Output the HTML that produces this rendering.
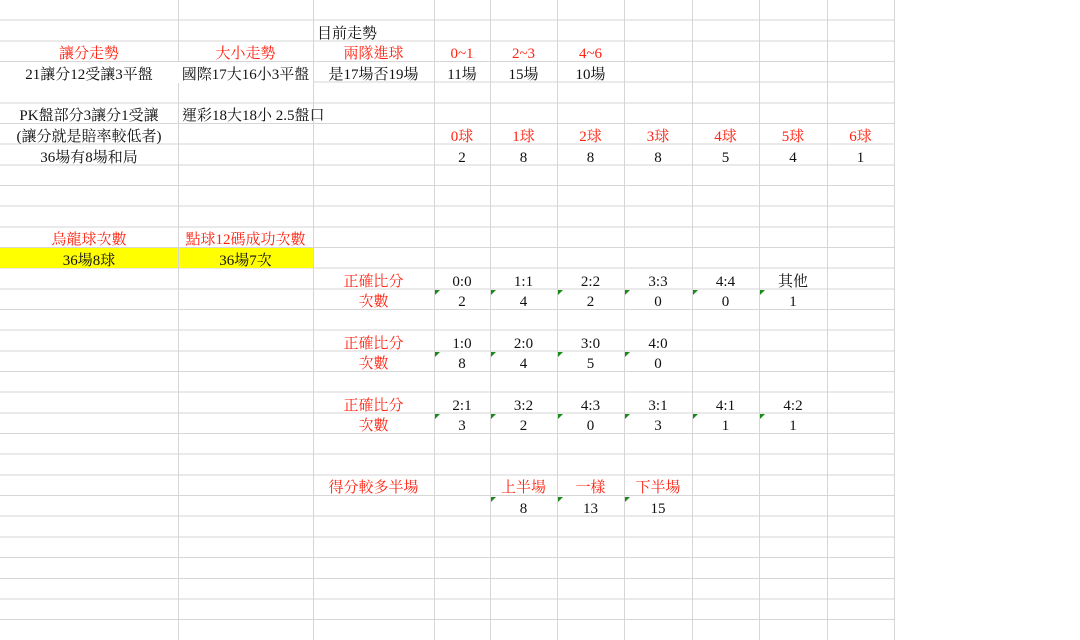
<!DOCTYPE html>
<html><head><meta charset="utf-8"><style>
body{margin:0;width:1080px;height:640px;background:#fff;overflow:hidden;position:relative;font-family:"Liberation Serif","Noto Serif CJK TC",serif;font-size:15px;color:#111}
.g{position:absolute;left:0;top:0;width:894px;height:640px;background:repeating-linear-gradient(to bottom,transparent 0,transparent 19.67px,#d6d6d6 19.67px,#d6d6d6 20.67px)}
.v{position:absolute;top:0;width:1px;height:640px;background:#d6d6d6}
.c{position:absolute;height:21px;line-height:26px;text-align:center;white-space:nowrap}
.r{color:#f21}
.l{text-align:left}
.t{position:absolute;width:0;height:0;border-top:5px solid #1a8a1a;border-right:5px solid transparent}
.y{position:absolute;left:0;top:248px;width:313px;height:20px;background:#ffff00}
</style></head><body>
<div class="g"></div>
<div class="y"></div>
<div class="v" style="left:178px"></div><div class="v" style="left:313px"></div><div class="v" style="left:434px"></div><div class="v" style="left:490px"></div><div class="v" style="left:557px"></div><div class="v" style="left:624px"></div><div class="v" style="left:692px"></div><div class="v" style="left:759px"></div><div class="v" style="left:827px"></div><div class="v" style="left:894px"></div>

<div class="c l" style="left:317px;top:21px">目前走勢</div>

<div class="c r" style="left:0;width:178px;top:41px">讓分走勢</div>
<div class="c r" style="left:178px;width:135px;top:41px">大小走勢</div>
<div class="c r" style="left:313px;width:121px;top:41px">兩隊進球</div>
<div class="c r" style="left:434px;width:56px;top:41px">0~1</div>
<div class="c r" style="left:490px;width:67px;top:41px">2~3</div>
<div class="c r" style="left:557px;width:67px;top:41px">4~6</div>

<div class="c" style="left:0;width:178px;top:62px;background:#fff">21讓分12受讓3平盤</div>
<div class="c" style="left:178px;width:135px;top:62px;background:#fff">國際17大16小3平盤</div>
<div class="c" style="left:313px;width:121px;top:62px">是17場否19場</div>
<div class="c" style="left:434px;width:56px;top:62px">11場</div>
<div class="c" style="left:490px;width:67px;top:62px">15場</div>
<div class="c" style="left:557px;width:67px;top:62px">10場</div>

<div class="c" style="left:0;width:178px;top:103px">PK盤部分3讓分1受讓</div>
<div class="c l" style="left:182px;top:103px">運彩18大18小 2.5盤口</div>

<div class="c" style="left:0;width:178px;top:124px">(讓分就是賠率較低者)</div>
<div class="c r" style="left:434px;width:56px;top:124px">0球</div>
<div class="c r" style="left:490px;width:67px;top:124px">1球</div>
<div class="c r" style="left:557px;width:67px;top:124px">2球</div>
<div class="c r" style="left:624px;width:68px;top:124px">3球</div>
<div class="c r" style="left:692px;width:67px;top:124px">4球</div>
<div class="c r" style="left:759px;width:68px;top:124px">5球</div>
<div class="c r" style="left:827px;width:67px;top:124px">6球</div>

<div class="c" style="left:0;width:178px;top:145px">36場有8場和局</div>
<div class="c" style="left:434px;width:56px;top:145px">2</div>
<div class="c" style="left:490px;width:67px;top:145px">8</div>
<div class="c" style="left:557px;width:67px;top:145px">8</div>
<div class="c" style="left:624px;width:68px;top:145px">8</div>
<div class="c" style="left:692px;width:67px;top:145px">5</div>
<div class="c" style="left:759px;width:68px;top:145px">4</div>
<div class="c" style="left:827px;width:67px;top:145px">1</div>

<div class="c r" style="left:0;width:178px;top:227px">烏龍球次數</div>
<div class="c r" style="left:178px;width:135px;top:227px">點球12碼成功次數</div>
<div class="c" style="left:0;width:178px;top:248px">36場8球</div>
<div class="c" style="left:178px;width:135px;top:248px">36場7次</div>

<div class="c r" style="left:313px;width:121px;top:269px">正確比分</div>
<div class="c" style="left:434px;width:56px;top:269px">0:0</div>
<div class="c" style="left:490px;width:67px;top:269px">1:1</div>
<div class="c" style="left:557px;width:67px;top:269px">2:2</div>
<div class="c" style="left:624px;width:68px;top:269px">3:3</div>
<div class="c" style="left:692px;width:67px;top:269px">4:4</div>
<div class="c" style="left:759px;width:68px;top:269px">其他</div>
<div class="c r" style="left:313px;width:121px;top:289px">次數</div>
<div class="c" style="left:434px;width:56px;top:289px">2</div>
<div class="c" style="left:490px;width:67px;top:289px">4</div>
<div class="c" style="left:557px;width:67px;top:289px">2</div>
<div class="c" style="left:624px;width:68px;top:289px">0</div>
<div class="c" style="left:692px;width:67px;top:289px">0</div>
<div class="c" style="left:759px;width:68px;top:289px">1</div>

<div class="c r" style="left:313px;width:121px;top:331px">正確比分</div>
<div class="c" style="left:434px;width:56px;top:331px">1:0</div>
<div class="c" style="left:490px;width:67px;top:331px">2:0</div>
<div class="c" style="left:557px;width:67px;top:331px">3:0</div>
<div class="c" style="left:624px;width:68px;top:331px">4:0</div>
<div class="c r" style="left:313px;width:121px;top:351px">次數</div>
<div class="c" style="left:434px;width:56px;top:351px">8</div>
<div class="c" style="left:490px;width:67px;top:351px">4</div>
<div class="c" style="left:557px;width:67px;top:351px">5</div>
<div class="c" style="left:624px;width:68px;top:351px">0</div>

<div class="c r" style="left:313px;width:121px;top:393px">正確比分</div>
<div class="c" style="left:434px;width:56px;top:393px">2:1</div>
<div class="c" style="left:490px;width:67px;top:393px">3:2</div>
<div class="c" style="left:557px;width:67px;top:393px">4:3</div>
<div class="c" style="left:624px;width:68px;top:393px">3:1</div>
<div class="c" style="left:692px;width:67px;top:393px">4:1</div>
<div class="c" style="left:759px;width:68px;top:393px">4:2</div>
<div class="c r" style="left:313px;width:121px;top:413px">次數</div>
<div class="c" style="left:434px;width:56px;top:413px">3</div>
<div class="c" style="left:490px;width:67px;top:413px">2</div>
<div class="c" style="left:557px;width:67px;top:413px">0</div>
<div class="c" style="left:624px;width:68px;top:413px">3</div>
<div class="c" style="left:692px;width:67px;top:413px">1</div>
<div class="c" style="left:759px;width:68px;top:413px">1</div>

<div class="c r" style="left:313px;width:121px;top:475px">得分較多半場</div>
<div class="c r" style="left:490px;width:67px;top:475px">上半場</div>
<div class="c r" style="left:557px;width:67px;top:475px">一樣</div>
<div class="c r" style="left:624px;width:68px;top:475px">下半場</div>
<div class="c" style="left:490px;width:67px;top:496px">8</div>
<div class="c" style="left:557px;width:67px;top:496px">13</div>
<div class="c" style="left:624px;width:68px;top:496px">15</div>

<div class="t" style="left:435px;top:290px"></div><div class="t" style="left:491px;top:290px"></div><div class="t" style="left:558px;top:290px"></div><div class="t" style="left:625px;top:290px"></div><div class="t" style="left:693px;top:290px"></div><div class="t" style="left:760px;top:290px"></div>
<div class="t" style="left:435px;top:352px"></div><div class="t" style="left:491px;top:352px"></div><div class="t" style="left:558px;top:352px"></div><div class="t" style="left:625px;top:352px"></div>
<div class="t" style="left:435px;top:414px"></div><div class="t" style="left:491px;top:414px"></div><div class="t" style="left:558px;top:414px"></div><div class="t" style="left:625px;top:414px"></div><div class="t" style="left:693px;top:414px"></div><div class="t" style="left:760px;top:414px"></div>
<div class="t" style="left:491px;top:497px"></div><div class="t" style="left:558px;top:497px"></div><div class="t" style="left:625px;top:497px"></div>
</body></html>
